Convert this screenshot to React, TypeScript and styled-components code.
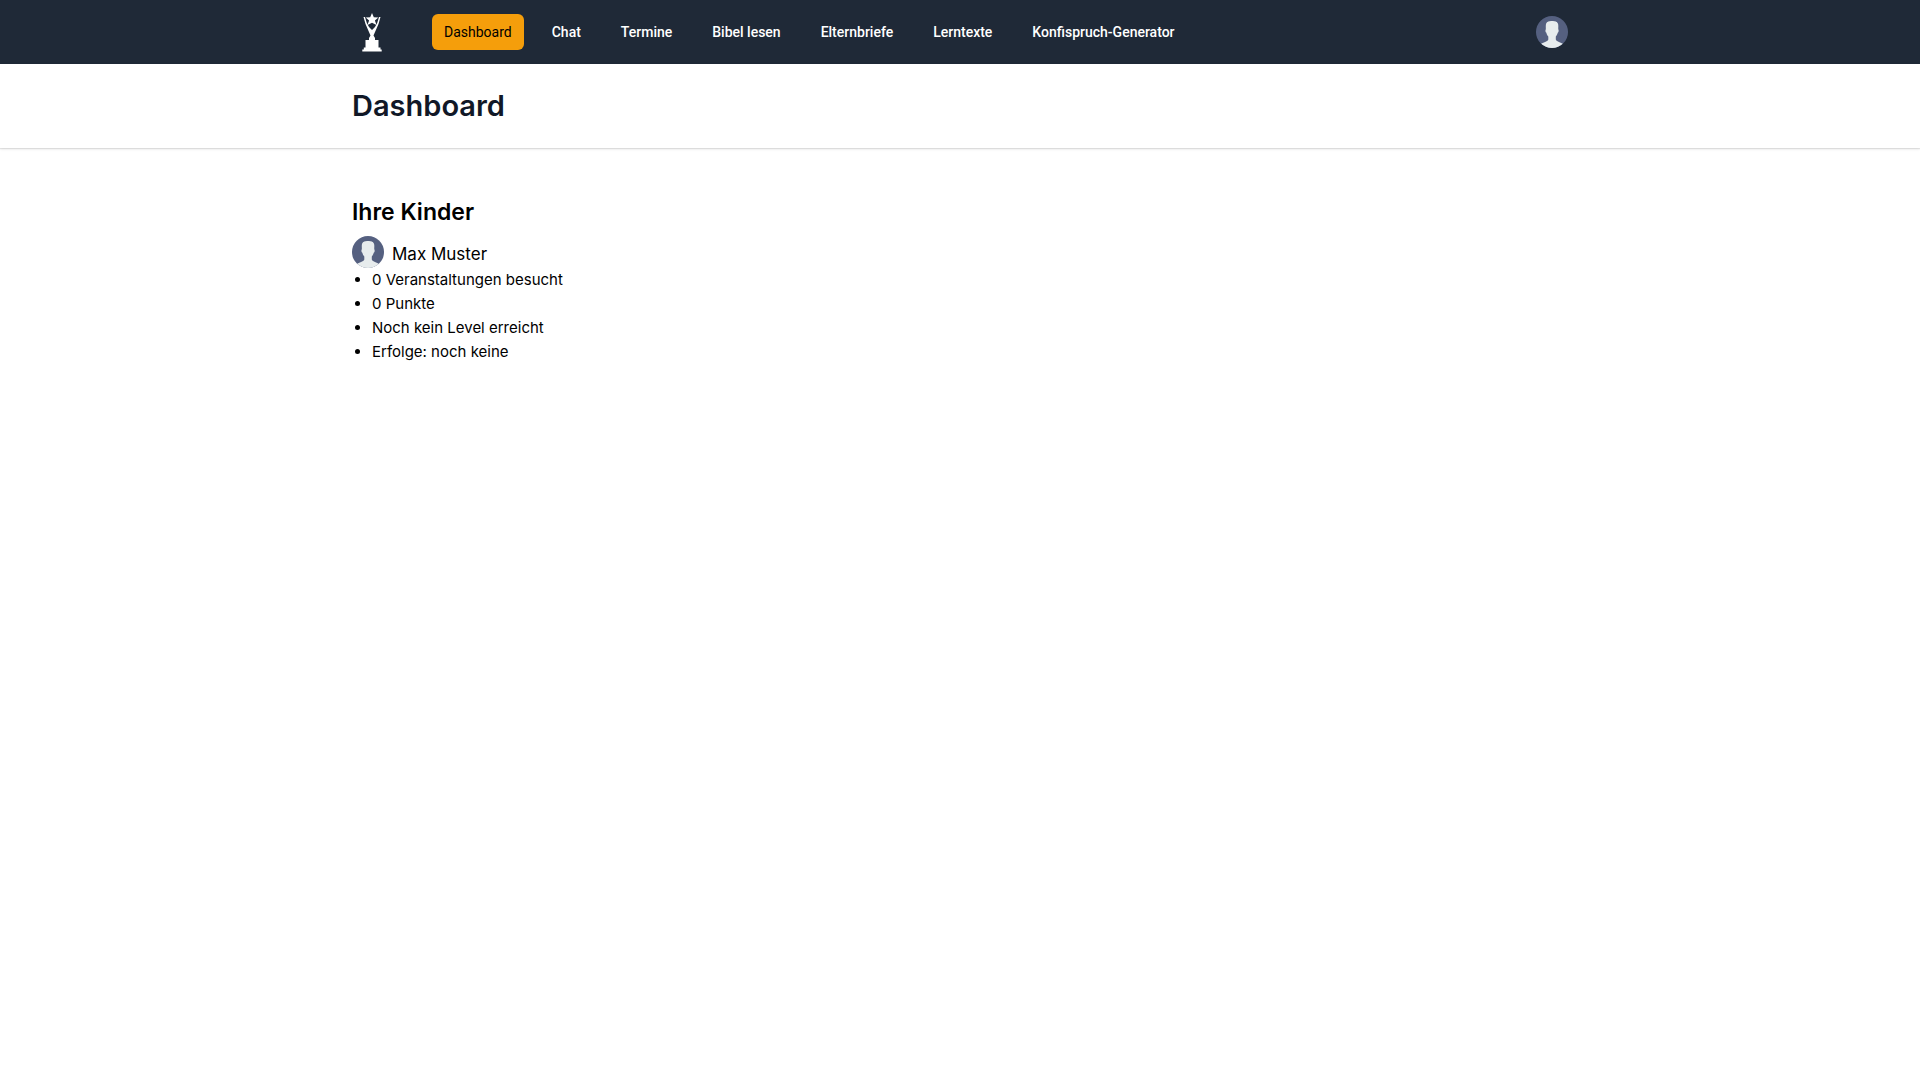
import React from "react";
import styled, { createGlobalStyle } from "styled-components";

const GlobalStyle = createGlobalStyle`
  *, *::before, *::after { box-sizing: border-box; }
  body {
    margin: 0;
    background: #fff;
    color: #000;
    font-family: Inter, "Open Sans", sans-serif;
    font-size: 15px;
    line-height: 24px;
  }
`;

const Container = styled.div`
  max-width: 1280px;
  margin: 0 auto;
  padding: 0 32px;
`;

const TopBar = styled.header`
  background: #1f2937;
`;

const TopBarRow = styled(Container)`
  display: flex;
  align-items: center;
  height: 64px;
`;

const LogoLink = styled.a`
  display: flex;
  margin-right: 40px;
`;

const NavLinks = styled.nav`
  display: flex;
  gap: 16px;
`;

const NavLink = styled.a<{ $active?: boolean }>`
  padding: 8px 12px;
  border-radius: 6px;
  font-family: Roboto, sans-serif;
  font-size: 14px;
  line-height: 20px;
  font-weight: ${(p) => (p.$active ? 400 : 500)};
  color: ${(p) => (p.$active ? "#000" : "#fff")};
  background: ${(p) => (p.$active ? "#f59e0b" : "transparent")};
  text-decoration: none;
  white-space: nowrap;
`;

const ProfileButton = styled.button`
  display: flex;
  margin: 0 0 0 auto;
  padding: 0;
  border: 0;
  border-radius: 50%;
  background: none;
  cursor: pointer;
`;

const PageHeader = styled.div`
  padding: 24px 0;
  background: #fff;
  box-shadow: 0 1px 3px rgba(0, 0, 0, 0.1), 0 1px 1px rgba(0, 0, 0, 0.08);
`;

const PageTitle = styled.h1`
  margin: 0;
  color: #111827;
  font-size: 29px;
  line-height: 36px;
  font-weight: 600;
`;

const Content = styled.main`
  padding: 48px 0;
`;

const SectionTitle = styled.h2`
  margin: 0 0 8px;
  font-size: 23px;
  line-height: 32px;
  font-weight: 600;
`;

const ChildHeader = styled.div`
  display: flex;
  align-items: flex-end;
  gap: 8px;
`;

const ChildName = styled.h3`
  margin: 0;
  font-size: 17px;
  line-height: 28px;
  font-weight: 400;
`;

const Facts = styled.ul`
  margin: 0;
  padding: 0 0 0 20px;
`;

function Avatar() {
  return (
    <svg width="32" height="32" viewBox="0 0 32 32" aria-hidden="true">
      <clipPath id="avatar-round">
        <circle cx="16" cy="16" r="16" />
      </clipPath>
      <g clipPath="url(#avatar-round)">
        <rect width="32" height="32" fill="#556080" />
        <path
          fill="#e7eced"
          d="M16 5C19 5 21.700 5.600 22.200 8.500C22.500 10.500 22.100 12 22.300 13.200C23 14.500 22.600 16.200 21.700 16.800C21.300 18.500 20.700 19.500 19.800 20.400V23.500C20.300 25.500 24 25.900 27 28V32H5V28C8 25.900 11.900 25.500 12.300 23.500V20.400C11.300 19.500 10.700 18.500 10.400 16.800C9.400 16.200 9.100 14.500 9.800 13.200C10 12 9.600 10.500 9.900 8.500C10.400 5.600 13 5 16 5Z"
        />
      </g>
    </svg>
  );
}

function Trophy() {
  return (
    <svg width="40" height="40" viewBox="0 0 40 40" fill="#fff" aria-hidden="true">
      <path d="M20 1L21.800 5.200L26.300 5.600L22.900 8.600L24.500 13L20 10.800L15.500 13L17.100 8.600L13.700 5.600L18.200 5.200Z" />
      <path d="M11.500 5H13L14.800 11L17 15L20 18L23 15L25.200 11L27 5H28.500L26.500 12L21.500 23.500L23 26V28H26.500V35.500H28.500V37.500H29.700V39.500H10.300V37.500H11.800V35.500H13.500V28H17V26L18.500 23.500L13.500 12Z" />
    </svg>
  );
}

const links = [
  "Dashboard",
  "Chat",
  "Termine",
  "Bibel lesen",
  "Elternbriefe",
  "Lerntexte",
  "Konfispruch-Generator",
];

const facts = [
  "0 Veranstaltungen besucht",
  "0 Punkte",
  "Noch kein Level erreicht",
  "Erfolge: noch keine",
];

export default function App() {
  return (
    <>
      <GlobalStyle />
      <TopBar>
        <TopBarRow>
          <LogoLink href="#" aria-label="Startseite">
            <Trophy />
          </LogoLink>
          <NavLinks>
            {links.map((label, i) => (
              <NavLink
                key={label}
                href="#"
                $active={i === 0}
                aria-current={i === 0 ? "page" : undefined}
              >
                {label}
              </NavLink>
            ))}
          </NavLinks>
          <ProfileButton type="button" aria-label="Profil">
            <Avatar />
          </ProfileButton>
        </TopBarRow>
      </TopBar>
      <PageHeader>
        <Container>
          <PageTitle>Dashboard</PageTitle>
        </Container>
      </PageHeader>
      <Content>
        <Container>
          <SectionTitle>Ihre Kinder</SectionTitle>
          <ChildHeader>
            <Avatar />
            <ChildName>Max Muster</ChildName>
          </ChildHeader>
          <Facts>
            {facts.map((fact) => (
              <li key={fact}>{fact}</li>
            ))}
          </Facts>
        </Container>
      </Content>
    </>
  );
}
